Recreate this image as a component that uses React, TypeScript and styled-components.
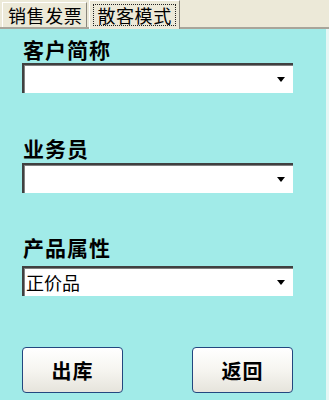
import styled, { createGlobalStyle } from "styled-components"

const GlobalStyle = createGlobalStyle`
	html, body {
		margin: 0;
		padding: 0;
		background: #a1ebe8;
	}
	* {
		box-sizing: border-box;
	}
`

const Window = styled.div`
	width: 329px;
	height: 400px;
	display: flex;
	flex-direction: column;
	font-family: "Noto Sans CJK SC", "Liberation Sans", sans-serif;
	color: #000;
	overflow: hidden;
`

const TabStrip = styled.div`
	height: 29px;
	flex: none;
	display: flex;
	align-items: flex-end;
	padding-left: 2px;
	background: #ece9d8;
	border-bottom: 2px solid #a8a59a;
`

const Tab = styled.div<{ $active?: boolean }>`
	height: ${(p) => (p.$active ? "29px" : "25px")};
	margin-bottom: ${(p) => (p.$active ? "-2px" : "0")};
	padding: ${(p) => (p.$active ? "3px" : "0 4px 0 5px")};
	display: flex;
	align-items: center;
	font-size: 18px;
	letter-spacing: 0.6px;
	line-height: 1;
	background: #ece9d8;
	border-top: 1px solid #fff;
	border-left: 1px solid #fff;
	border-right: 1px solid #8a877d;
	margin-left: ${(p) => (p.$active ? "2px" : "0")};
`

const FocusRect = styled.span`
	height: 100%;
	display: flex;
	align-items: center;
	padding: 0 3px 0 3px;
	border: 1px dotted #222;
`

const Panel = styled.div`
	flex: 1;
	display: flex;
	flex-direction: column;
	padding: 9px 33px 0 22px;
	background: #a1ebe8;
	border-right: 3px solid #e6f7f5;
`

const Field = styled.div<{ $gap: number }>`
	display: flex;
	flex-direction: column;
	margin-bottom: ${(p) => p.$gap}px;
`

const Label = styled.div`
	height: 24px;
	font-size: 21px;
	letter-spacing: 1px;
	line-height: 22px;
	font-weight: bold;
	padding-left: 1px;
`

const Select = styled.div<{ $offset: number }>`
	margin-top: ${(p) => p.$offset}px;
	height: 30px;
	display: flex;
	align-items: center;
	justify-content: space-between;
	background: #fff;
	border-top: 2px solid #404040;
	border-left: 2px solid #404040;
	box-shadow: inset 1px 1px 0 #808080;
	padding: 0 8px 0 2px;
	font-size: 18px;
`

const Arrow = styled.span`
	width: 0;
	height: 0;
	border-left: 4px solid transparent;
	border-right: 4px solid transparent;
	border-top: 5px solid #000;
`

const ButtonRow = styled.div`
	display: flex;
	justify-content: space-between;
	margin-top: 51px;
`

const Button = styled.button`
	width: 101px;
	height: 46px;
	border: 1px solid #23477f;
	border-radius: 4px;
	background: linear-gradient(#ffffff 0%, #f6f5f0 50%, #e6e4dc 100%);
	font-family: "Noto Sans CJK SC", "Liberation Sans", sans-serif;
	font-size: 20px;
	letter-spacing: 1px;
	font-weight: bold;
	color: #000;
	padding: 0;
`

export default function App() {
	return (
		<Window>
			<GlobalStyle />
			<TabStrip>
				<Tab>销售发票</Tab>
				<Tab $active>
					<FocusRect>散客模式</FocusRect>
				</Tab>
			</TabStrip>
			<Panel>
				<Field $gap={44}>
					<Label>客户简称</Label>
					<Select $offset={1}>
						<span />
						<Arrow />
					</Select>
				</Field>
				<Field $gap={43}>
					<Label>业务员</Label>
					<Select $offset={2}>
						<span />
						<Arrow />
					</Select>
				</Field>
				<Field $gap={0}>
					<Label>产品属性</Label>
					<Select $offset={6}>
						<span>正价品</span>
						<Arrow />
					</Select>
				</Field>
				<ButtonRow>
					<Button>出库</Button>
					<Button>返回</Button>
				</ButtonRow>
			</Panel>
		</Window>
	)
}
